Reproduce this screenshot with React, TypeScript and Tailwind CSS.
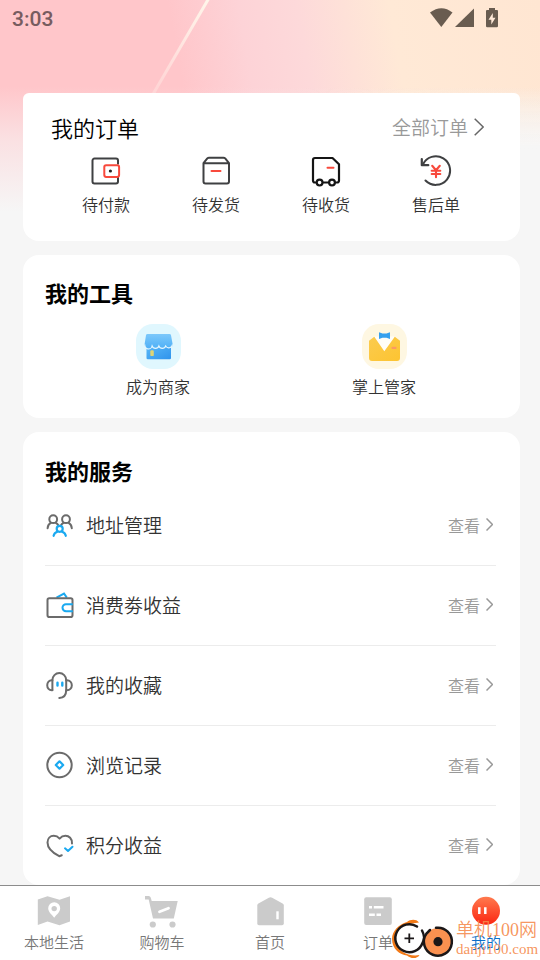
import type { ReactNode } from 'react';

interface IconItem {
  label: string;
  icon: ReactNode;
}

const DARK = '#3f4042';
const RED = '#f8493c';
const GREY = '#6b6b6b';
const BLUE = '#1aa9f0';
const TAB = '#cbcbcb';

// Order icons, 32x32
const orders: IconItem[] = [
  {
    label: '待付款',
    icon: (
      <svg className="size-8" viewBox="0 0 32 32" fill="none" strokeWidth="2">
        <path d="M28 9.500V5.500a2 2 0 0 0-2-2H4.500a2 2 0 0 0-2 2v21a2 2 0 0 0 2 2H26a2 2 0 0 0 2-2V22" stroke={DARK} />
        <rect x="14.300" y="10.300" width="14.800" height="11.600" rx="1.800" stroke={RED} fill="#fff" />
        <circle cx="20.400" cy="16" r="1.600" fill="#222" />
      </svg>
    ),
  },
  {
    label: '待发货',
    icon: (
      <svg className="size-8" viewBox="0 0 32 32" fill="none" strokeWidth="2" strokeLinejoin="round" strokeLinecap="round">
        <path d="M3.500 8.200 7.300 3.400Q8 2.700 9 2.700H23.500Q24.500 2.700 25.200 3.400L29 8.200V26.500a2 2 0 0 1-2 2H5.500a2 2 0 0 1-2-2ZM3.500 8.200H29" stroke={DARK} />
        <path d="M11.500 16H20.500" stroke={RED} />
      </svg>
    ),
  },
  {
    label: '待收货',
    icon: (
      <svg className="size-8" viewBox="0 0 32 32" fill="none" strokeWidth="2.200" strokeLinejoin="round">
        <path d="M6.600 27.500H5a2 2 0 0 1-2-2V5a2 2 0 0 1 2-2H22.500L29 9.300V25.500a2 2 0 0 1-2 2H25M12.500 27.500H19" stroke="#151515" />
        <circle cx="9.600" cy="27.600" r="2.900" stroke="#151515" />
        <circle cx="22" cy="27.600" r="2.900" stroke="#151515" />
        <path d="M17.500 12.700H23.500" stroke={RED} strokeLinecap="round" strokeWidth="2" />
      </svg>
    ),
  },
  {
    label: '售后单',
    icon: (
      <svg className="size-8" viewBox="0 0 32 32" fill="none" strokeWidth="2" strokeLinecap="round" strokeLinejoin="round">
        <path d="M2.800 9.600A14.300 14.300 0 1 1 5.500 25.500" stroke={DARK} />
        <path d="M1.800 4V10.200H8.300" stroke={DARK} strokeWidth="2.200" />
        <path d="M12.200 10.800 16 15.200 19.800 10.800M11.700 15.700H20.300M11.700 19H20.300M16 15.500V22.300" stroke={RED} strokeWidth="2.100" />
      </svg>
    ),
  },
];

const tools: IconItem[] = [
  {
    label: '成为商家',
    icon: (
      <svg className="size-[45px]" viewBox="0 0 45 45">
        <defs>
          <linearGradient id="awning" x1="0" y1="0" x2="0" y2="1">
            <stop offset="0" stopColor="#7cc8fb" />
            <stop offset="1" stopColor="#4fb0f6" />
          </linearGradient>
          <linearGradient id="shop" x1="0" y1="0" x2="1" y2="1">
            <stop offset="0" stopColor="#58b8f8" />
            <stop offset="1" stopColor="#2f93ec" />
          </linearGradient>
        </defs>
        <rect width="45" height="45" rx="17" fill="#e0f7fe" />
        <path d="M10.500 22H35V34a1.300 1.300 0 0 1-1.300 1.300H11.800a1.300 1.300 0 0 1-1.300-1.300Z" fill="url(#shop)" />
        <path d="M11.500 10H33.500a1.500 1.500 0 0 1 1.500 1.200L36.500 19.500a3.400 3.400 0 0 1-6.800 1.500 3.400 3.400 0 0 1-6.800 0 3.400 3.400 0 0 1-6.800 0A3.400 3.400 0 0 1 8.700 19.500L10 11.200a1.500 1.500 0 0 1 1.500-1.200Z" fill="url(#awning)" />
        <path d="M8.900 20.500a3.600 3.600 0 0 0 7.200 1.500 3.600 3.600 0 0 0 6.800 0 3.600 3.600 0 0 0 6.800 0 3.600 3.600 0 0 0 6.700-1.500" fill="none" stroke="#e6f7fe" strokeWidth="1.100" />
        <rect x="14.300" y="26.300" width="3.500" height="5.800" rx="1.200" fill="#ded475" />
      </svg>
    ),
  },
  {
    label: '掌上管家',
    icon: (
      <svg className="size-[45px]" viewBox="0 0 45 45">
        <defs>
          <linearGradient id="vest" x1="0" y1="0" x2="1" y2="1">
            <stop offset="0" stopColor="#fbcb4e" />
            <stop offset="1" stopColor="#fdc431" />
          </linearGradient>
        </defs>
        <rect width="45" height="45" rx="17" fill="#fef7e2" />
        <path d="M12 12.500H33L22.300 28Z" fill="#fffdf8" />
        <path d="M7 16.800 12.300 12.800 22.300 27.200 32.800 12.800 38 16.800V34a3 3 0 0 1-3 3H10a3 3 0 0 1-3-3Z" fill="url(#vest)" />
        <path d="M17 8.300 20.500 9.500H24.500L28 8.300V15L24.500 13.800H20.500L17 15Z" fill="#36a0ee" />
        <rect x="29.500" y="22.700" width="5" height="2.300" rx=".8" fill="#fb9a63" />
      </svg>
    ),
  },
];

// Service icons, 28x28
const services: IconItem[] = [
  {
    label: '地址管理',
    icon: (
      <svg className="size-7" viewBox="0 0 28 28" fill="none" strokeWidth="2" strokeLinecap="round">
        <g stroke={GREY}>
          <circle cx="7.200" cy="8.200" r="3.900" />
          <circle cx="20" cy="8.200" r="3.900" />
          <path d="M1.600 17.200C1.800 14.500 3 12.800 5 11.700M9.500 11.700C11 12.500 12 13.500 12.600 14.700M25.800 17.200C25.600 14.500 24.300 12.800 22.400 11.700M17.800 11.700C16.300 12.500 15.300 13.500 14.700 14.700" />
        </g>
        <g stroke={BLUE} strokeWidth="2.200">
          <circle cx="13.700" cy="17.800" r="3" />
          <path d="M7.600 24.800C8 22.800 9.300 21.500 11.300 20.800M19.800 24.800C19.400 22.800 18.100 21.500 16.100 20.800" />
        </g>
      </svg>
    ),
  },
  {
    label: '消费劵收益',
    icon: (
      <svg className="size-7" viewBox="0 0 28 28" fill="none" strokeWidth="2">
        <path d="M10.500 6.600 18 2.500 20.800 6.600" stroke={BLUE} />
        <rect x="1.500" y="7.300" width="25" height="18.700" rx="1.800" stroke={GREY} />
        <path d="M26.800 13.200H20a3.500 3.500 0 0 0 0 7H26.800" stroke={BLUE} />
      </svg>
    ),
  },
  {
    label: '我的收藏',
    icon: (
      <svg className="size-7" viewBox="0 0 28 28" fill="none" strokeWidth="2" strokeLinecap="round">
        <g stroke={GREY}>
          <path d="M6.400 19V9A6.800 6.800 0 0 1 20.200 9V19C20.200 24 17.500 26.800 13.300 26.900" />
          <path d="M6.400 9.300C-.5 8.500-.5 20 6.400 19.200M20.200 9.300C27.700 8.500 27.700 20 20.200 19.200" />
        </g>
        <path d="M11.500 11.800V14.500M16.300 11.800V14.500" stroke={BLUE} strokeWidth="2.400" />
      </svg>
    ),
  },
  {
    label: '浏览记录',
    icon: (
      <svg className="size-7" viewBox="0 0 28 28" fill="none">
        <circle cx="13.500" cy="14" r="12.200" stroke={GREY} strokeWidth="2" />
        <path d="M13.500 10.300 17.200 14 13.500 17.700 9.800 14Z" stroke={BLUE} strokeWidth="2.200" strokeLinejoin="round" />
      </svg>
    ),
  },
  {
    label: '积分收益',
    icon: (
      <svg className="size-7" viewBox="0 0 28 28" fill="none" strokeWidth="2" strokeLinecap="round" strokeLinejoin="round">
        <path d="M26 12.500C26.200 7.500 23 4.800 19.400 4.800 17 4.800 15 6 13.600 7.600 12.200 6 10.200 4.800 7.800 4.800 4.200 4.800 1.500 7.500 1.500 11.500 1.500 17.500 7 22 13.200 25.200L15.800 24.200" stroke={GREY} />
        <path d="M19 17.300 22 20 26.500 15.700" stroke={BLUE} />
      </svg>
    ),
  },
];

// Tab bar icons, 34x34
const tabs: IconItem[] = [
  {
    label: '本地生活',
    icon: (
      <svg className="size-[34px]" viewBox="0 0 34 34">
        <path d="M.8 5.500 10.500 2.200 22.500 5.800 33 2.200V27.500L22.500 31.200 10.500 27.500.8 31Z" fill={TAB} />
        <path d="M17.200 8.300a6 6 0 0 1 6 6c0 3.800-3.500 6.200-6 9.400-2.500-3.200-6-5.600-6-9.400a6 6 0 0 1 6-6Z" fill="#fff" />
        <circle cx="17.200" cy="14.600" r="2.700" fill={TAB} />
      </svg>
    ),
  },
  {
    label: '购物车',
    icon: (
      <svg className="size-[34px]" viewBox="0 0 34 34">
        <path d="M0 2H3.800Q5.200 2 5.700 3.500L6.700 7H32.700L28.800 24.500H8L3.700 5.500H0Z" fill={TAB} />
        <circle cx="7.800" cy="30.500" r="3.100" fill={TAB} />
        <circle cx="27.500" cy="30.500" r="3.100" fill={TAB} />
        <path d="M14.500 17.800 23.500 14.300" stroke="#fff" strokeWidth="2.800" strokeLinecap="round" />
      </svg>
    ),
  },
  {
    label: '首页',
    icon: (
      <svg className="size-[34px]" viewBox="0 0 34 34">
        <path d="M4.300 11.500Q4.300 10.200 5.400 9.500L15.800 3.700Q17.500 2.800 19.200 3.700L29.600 9.500Q30.800 10.200 30.800 11.500V29.500Q30.800 31.200 29 31.200H6Q4.300 31.200 4.300 29.500Z" fill={TAB} />
        <rect x="23.300" y="17.300" width="2.400" height="8" fill="#fff" />
      </svg>
    ),
  },
  {
    label: '订单',
    icon: (
      <svg className="size-[34px]" viewBox="0 0 34 34">
        <rect x="3.200" y="3.300" width="27.600" height="27.700" rx="2" fill={TAB} />
        <path d="M8 13.300H11M12.800 13.300H22.500M8 20.800H13.800M15.500 20.800H20" stroke="#fff" strokeWidth="2.600" />
      </svg>
    ),
  },
  {
    label: '我的',
    icon: (
      <svg className="size-[34px]" viewBox="0 0 34 34">
        <defs>
          <linearGradient id="me" x1="0" y1="0" x2="0" y2="1">
            <stop offset="0" stopColor="#ff7a4e" />
            <stop offset="1" stopColor="#fb2511" />
          </linearGradient>
        </defs>
        <circle cx="17" cy="16.800" r="14" fill="url(#me)" />
        <path d="M10.300 13.200V20M16.300 13.200V20" stroke="#fff" strokeWidth="2.500" />
      </svg>
    ),
  },
];

function StatusBar() {
  return (
    <div className="flex h-9 items-center justify-between pr-[41px] pl-3">
      <span className="pt-1 font-[Roboto] text-[21px] font-medium text-[#775c5f]">3:03</span>
      <div className="flex items-center">
        <svg className="h-5 w-[46px]" viewBox="0 0 46 20" fill="#695c50">
          <path d="M1 4.500Q12.500-4 23.500 4.500L12.300 19Z" />
          <path d="M45 .5V19H26Z" />
        </svg>
        <svg className="ml-2.5 h-5 w-3.5" viewBox="0 0 14 20">
          <path d="M4 0H10V2H12a1 1 0 0 1 1 1V18a1.200 1.200 0 0 1-1.200 1.200H2.200A1.200 1.200 0 0 1 1 18V3a1 1 0 0 1 1-1H4Z" fill="#695c50" />
          <path d="M7.800 5 3.500 11.700H6.300V16.500L10.500 9.800H7.800Z" fill="#ffe9d8" />
        </svg>
      </div>
    </div>
  );
}

function Backdrop() {
  return (
    <div className="absolute inset-x-0 top-0 -z-10 h-60 overflow-hidden">
      <div className="absolute inset-0 bg-[linear-gradient(80deg,#ffc6ca_36%,#fdd3d7_48%,#fdd9da_58%,#ffe9d6_74%,#ffe6d2_100%)]" />
      <div className="absolute inset-0 bg-[linear-gradient(to_bottom,transparent_36%,rgba(246,246,246,0.55)_58%,#f6f6f6_88%)]" />
      <div className="absolute inset-y-0 right-0 w-1/2 bg-[linear-gradient(to_bottom,transparent_36%,#f6f6f6_62%)] mask-l-from-20% mask-l-to-100%" />
      <svg className="absolute top-0 left-0 h-24 w-60" viewBox="0 0 240 96">
        <defs>
          <linearGradient id="streak" x1="0" y1="0" x2="0" y2="1">
            <stop offset="0" stopColor="#fff6ea" />
            <stop offset="1" stopColor="#fff0ea" stopOpacity=".3" />
          </linearGradient>
        </defs>
        <path d="M209-2 152 96" stroke="url(#streak)" strokeWidth="3" />
      </svg>
    </div>
  );
}

function Chevron({ className }: { className: string }) {
  return (
    <svg className={className} viewBox="0 0 10 18" fill="none" stroke="currentColor" preserveAspectRatio="none">
      <path d="M.7.700 9.200 9 .7 17.300" vectorEffect="non-scaling-stroke" strokeWidth="1.500" />
    </svg>
  );
}

function Watermark() {
  return (
    <div className="pointer-events-none absolute right-0 bottom-0 flex items-end">
      <svg className="h-11 w-16" viewBox="0 0 64 44" fill="none">
        <path d="M29 6.500C26 2.500 20 3.500 17 6 9 8 2 15 2 23 2 33 10 39 17 39.500 20 42.500 27 43.500 29.500 39 20 41 6 36 5.500 23 5.300 14 14 7.500 29 6.500Z" fill="#f27a18" />
        <circle cx="19.300" cy="22.300" r="13.800" fill="#fff" />
        <path d="M27 10.500A14 14 0 1 0 32.500 27C34.500 23 35 20 32 14.500" stroke="#1b1718" strokeWidth="2.500" strokeLinecap="round" />
        <path d="M14.500 22.300H24M19.300 17.500V27" stroke="#1b1718" strokeWidth="1.800" />
        <circle cx="48" cy="25.700" r="13.800" fill="#fa9150" />
        <path d="M46 11.800A14 14 0 1 1 36.500 17.500L40 14" stroke="#1b1718" strokeWidth="2.500" strokeLinecap="round" />
        <circle cx="48" cy="25.700" r="4.600" fill="#1b1718" />
      </svg>
      <div className="mb-0.5 ml-0.5 w-[84px] font-['Liberation_Serif','Noto_Sans_CJK_SC',serif] text-[#f58a4c]/90">
        <p className="text-lg leading-5">单机100网</p>
        <p className="text-[15px] leading-[18px]">danji100.com</p>
      </div>
    </div>
  );
}

export default function App() {
  return (
    <div className="relative isolate flex min-h-screen flex-col bg-[#f6f6f6] font-['Noto_Sans_CJK_SC',sans-serif] font-[350] text-[#333]">
      <Backdrop />
      <StatusBar />

      <main className="mt-[57px] flex flex-col gap-3.5 pr-5 pl-[23px]">
        <section className="rounded-t-md rounded-b-2xl bg-white px-7 pt-[18px] pb-[25px]">
          <div className="flex h-8 items-center justify-between">
            <h2 className="text-[22px] leading-8 text-black">我的订单</h2>
            <button className="mr-2 flex items-center gap-1.5 text-[19px] leading-8 text-[#999]">
              全部订单
              <Chevron className="h-[18px] w-2.5 text-[#666]" />
            </button>
          </div>
          <div className="mt-3 mr-px grid grid-cols-4">
            {orders.map((item) => (
              <button key={item.label} className="flex flex-col items-center gap-[5px] text-base leading-6">
                {item.icon}
                {item.label}
              </button>
            ))}
          </div>
        </section>

        <section className="rounded-2xl bg-white px-[22px] pt-[21px] pb-5">
          <h2 className="text-[22px] leading-8 font-bold text-black">我的工具</h2>
          <div className="mt-4 mr-px grid grid-cols-2">
            {tools.map((item) => (
              <button key={item.label} className="flex flex-col items-center gap-[5px] text-base leading-6">
                {item.icon}
                {item.label}
              </button>
            ))}
          </div>
        </section>

        <section className="rounded-2xl bg-white px-[22px] pt-[22px]">
          <h2 className="text-[22px] leading-8 font-bold text-black">我的服务</h2>
          <ul className="mr-0.5 divide-y divide-[#ececec]">
            {services.map((item) => (
              <li key={item.label}>
                <button className="flex h-[79px] w-full items-center pr-[3px] pb-0.5 pl-px">
                  {item.icon}
                  <span className="ml-3 text-[19px] leading-8">{item.label}</span>
                  <span className="ml-auto text-base leading-6 text-[#999]">查看</span>
                  <Chevron className="ml-1.5 h-[13px] w-[7px] text-[#999]" />
                </button>
              </li>
            ))}
          </ul>
        </section>
      </main>

      <nav className="relative mt-auto grid grid-cols-5 border-t border-[#8c8c8c] bg-white pt-2 pb-1.5">
        {tabs.map((tab) => (
          <button
            key={tab.label}
            className={`flex flex-col items-center gap-0.5 text-[15px] leading-6 ${tab.label === '我的' ? 'text-[#0d6fc9]' : 'text-[#777]'}`}
          >
            {tab.icon}
            {tab.label}
          </button>
        ))}
        <Watermark />
      </nav>
    </div>
  );
}
